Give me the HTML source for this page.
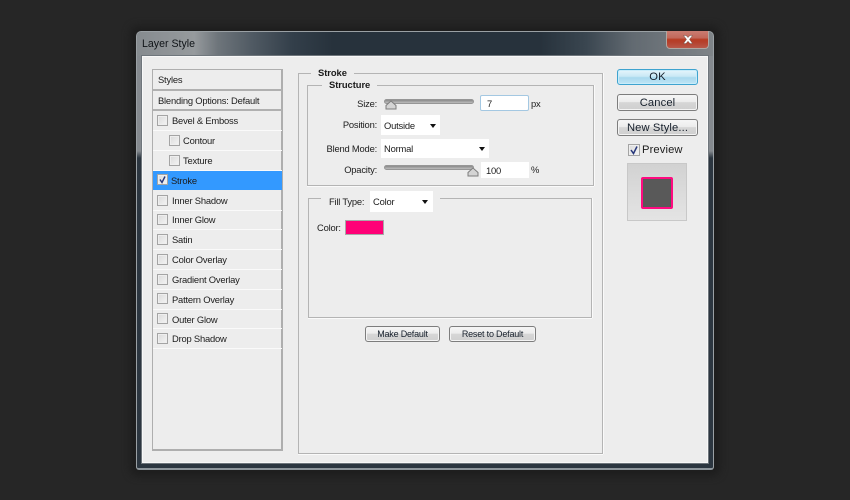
<!DOCTYPE html>
<html><head><meta charset="utf-8">
<style>
html,body{margin:0;padding:0;background:#262626;width:850px;height:500px;overflow:hidden}
body{position:relative;font-family:"Liberation Sans",sans-serif;font-size:9.4px;letter-spacing:-.2px;color:#1c1c1c;filter:blur(.3px)}
div,span{position:absolute;box-sizing:border-box}
.t{white-space:nowrap;line-height:12px;height:12px}
.win{left:136px;top:31px;width:578px;height:439px;border-radius:5px 5px 3px 3px;border:1px solid #9aa0a4;border-bottom:2px solid #8d959b;
background:linear-gradient(180deg,#858a8f 0,#858a8f 119px,#2c3640 126px,#2c3640 100%)}
.title{left:0;top:0;width:576px;height:24px;border-radius:4px 4px 0 0;background:linear-gradient(90deg,#868b8f 0,#969a9d 10%,#6e757b 14%,#505a63 20%,#333f4a 27%,#27323c 34%,#27323c 70%,#3a4650 78%,#626a71 86%,#7f8488 100%)}
.client{left:142px;top:56px;width:566px;height:407px;background:#ededed;border:1px solid #f8f8f8;outline:1px solid #6f767c}
.group{border:1px solid #b4b4b4;box-shadow:0 1px 0 #fafafa,1px 0 0 #fafafa}
.legend{background:#ededed;font-weight:bold;height:12px;line-height:12px;padding:0 7px;white-space:nowrap;font-size:9.4px;letter-spacing:-.05px}
.list{left:152px;top:69px;width:131px;height:382px;border:1px solid #aeaeae;border-width:1px 2px 2px 1px;background:#ededed}
.rowline{left:153px;width:129px;height:1px;background:#fafafa}
.hline{left:153px;width:129px;height:2px;background:#b0b0b0}
.cb{width:11px;height:11px;border:1px solid #a4a4a4;background:linear-gradient(135deg,#dadada,#f4f4f4);box-shadow:inset 0 0 0 1px #eeeeee}
.inp{background:#fff;height:16px;line-height:16px;padding-left:3px;white-space:nowrap}
.arrow{width:0;height:0;border-left:3.5px solid transparent;border-right:3.5px solid transparent;border-top:4px solid #111}
.track{height:5px;border-radius:3px;background:linear-gradient(180deg,#8a8a8a,#bcbcbc);border:1px solid #969696}
.btn{border:1px solid #7d7d7d;border-radius:3px;background:linear-gradient(180deg,#f6f6f6 0,#ececec 45%,#d6d6d6 50%,#cfcfcf 100%);box-shadow:inset 0 0 0 1px #f4f4f4;text-align:center;color:#17202c;white-space:nowrap}
.big{font-size:11.2px;letter-spacing:.12px}
</style></head><body>
<div style="left:130px;top:26px;width:590px;height:450px;background:#1d1d1d;border-radius:8px;filter:blur(4px)"></div>
<div class="win"><div class="title"></div></div>
<div class="t" style="left:142px;top:37px;font-size:10.6px;line-height:14px;height:14px;letter-spacing:0;color:#101418">Layer Style</div>

<!-- close -->
<div style="left:666px;top:31px;width:43px;height:18px;border:1px solid #b0a8a2;border-top:0;border-radius:0 0 4px 4px;background:linear-gradient(180deg,#c97d72 0,#c2685a 40%,#b73c24 50%,#b5402c 65%,#b9584a 100%)"></div>
<svg style="position:absolute;left:682px;top:35px" width="12" height="9"><path d="M1.5 0.5 H4 L6 2.6 L8 0.5 H10.5 L7.5 4.4 L10.5 8.5 H8 L6 6.2 L4 8.5 H1.5 L4.5 4.4 Z" fill="#fff" stroke="#6e5a55" stroke-width=".5"/></svg>

<div class="client"></div>

<!-- list -->
<div class="list"></div>
<div class="t" style="left:158px;top:74px">Styles</div>
<div class="hline" style="top:89px"></div>
<div class="t" style="left:158px;top:95px">Blending Options: Default</div>
<div class="hline" style="top:109px"></div>
<div class="rowline" style="top:130px"></div>
<div class="rowline" style="top:150px"></div>
<div class="rowline" style="top:170px"></div>
<div class="rowline" style="top:210px"></div>
<div class="rowline" style="top:229px"></div>
<div class="rowline" style="top:249px"></div>
<div class="rowline" style="top:269px"></div>
<div class="rowline" style="top:289px"></div>
<div class="rowline" style="top:309px"></div>
<div class="rowline" style="top:328px"></div>
<div class="rowline" style="top:348px"></div>
<div style="left:153px;top:171px;width:129px;height:19px;background:#3399ff"></div>

<div class="cb" style="left:157px;top:115px"></div><div class="t" style="left:172px;top:115px">Bevel &amp; Emboss</div>
<div class="cb" style="left:169px;top:135px"></div><div class="t" style="left:183px;top:135px">Contour</div>
<div class="cb" style="left:169px;top:155px"></div><div class="t" style="left:183px;top:155px">Texture</div>
<div class="cb" style="left:157px;top:174px"></div>
<svg style="position:absolute;left:157px;top:174px" width="11" height="11"><path d="M3 5.5 L5 8.5 L8 2.5" fill="none" stroke="#26367a" stroke-width="1.4"/></svg>
<div class="t" style="left:171px;top:175px">Stroke</div>
<div class="cb" style="left:157px;top:195px"></div><div class="t" style="left:172px;top:195px">Inner Shadow</div>
<div class="cb" style="left:157px;top:214px"></div><div class="t" style="left:172px;top:214px">Inner Glow</div>
<div class="cb" style="left:157px;top:234px"></div><div class="t" style="left:172px;top:234px">Satin</div>
<div class="cb" style="left:157px;top:254px"></div><div class="t" style="left:172px;top:254px">Color Overlay</div>
<div class="cb" style="left:157px;top:274px"></div><div class="t" style="left:172px;top:274px">Gradient Overlay</div>
<div class="cb" style="left:157px;top:293px"></div><div class="t" style="left:172px;top:294px">Pattern Overlay</div>
<div class="cb" style="left:157px;top:313px"></div><div class="t" style="left:172px;top:314px">Outer Glow</div>
<div class="cb" style="left:157px;top:333px"></div><div class="t" style="left:172px;top:333px">Drop Shadow</div>

<!-- stroke group -->
<div class="group" style="left:298px;top:73px;width:305px;height:381px"></div>
<div class="legend" style="left:311px;top:67px">Stroke</div>
<div class="group" style="left:307px;top:85px;width:287px;height:101px"></div>
<div class="legend" style="left:322px;top:79px">Structure</div>

<div class="t" style="right:473px;top:98px">Size:</div>
<div class="track" style="left:384px;top:99px;width:90px"></div>
<svg style="position:absolute;left:385px;top:100px" width="12" height="10"><path d="M1 9 V5.5 L6 1 L11 5.5 V9 Z" fill="#d4d4d4" stroke="#7d7d7d"/></svg>
<div class="inp" style="left:480px;top:95px;width:49px;height:16px;border:1px solid #a4c8e2;border-radius:2px;padding-left:6px;line-height:15px">7</div>
<div class="t" style="left:531px;top:98px">px</div>

<div class="t" style="right:473px;top:119px">Position:</div>
<div class="inp" style="left:381px;top:115px;width:59px;height:20px;line-height:21px">Outside</div>
<div class="arrow" style="left:430px;top:124px"></div>

<div class="t" style="right:473px;top:143px">Blend Mode:</div>
<div class="inp" style="left:381px;top:139px;width:108px;height:19px;line-height:20px">Normal</div>
<div class="arrow" style="left:479px;top:147px"></div>

<div class="t" style="right:473px;top:164px">Opacity:</div>
<div class="track" style="left:384px;top:165px;width:90px"></div>
<svg style="position:absolute;left:467px;top:167px" width="12" height="10"><path d="M1 9 V5.5 L6 1 L11 5.5 V9 Z" fill="#d4d4d4" stroke="#7d7d7d"/></svg>
<div class="inp" style="left:481px;top:162px;width:48px;height:16px;padding-left:5px;line-height:17px">100</div>
<div class="t" style="left:531px;top:164px">%</div>

<div class="group" style="left:308px;top:198px;width:284px;height:120px"></div>
<div style="left:321px;top:192px;width:119px;height:14px;background:#ededed"></div>
<div class="t" style="left:329px;top:196px">Fill Type:</div>
<div class="inp" style="left:370px;top:191px;width:63px;height:21px;line-height:22px">Color</div>
<div class="arrow" style="left:422px;top:200px"></div>
<div class="t" style="left:317px;top:222px">Color:</div>
<div style="left:345px;top:220px;width:39px;height:15px;background:#ff0077;border:1px solid #a8a8a8"></div>

<div class="btn" style="left:365px;top:326px;width:75px;height:16px;line-height:15px;font-size:9px">Make Default</div>
<div class="btn" style="left:449px;top:326px;width:87px;height:16px;line-height:15px;font-size:9px">Reset to Default</div>

<!-- right -->
<div class="btn big" style="left:617px;top:69px;width:81px;height:16px;line-height:15px;border:1px solid #3fa3cf;background:linear-gradient(180deg,#e6f5fb 0,#c9e8f5 45%,#a9d9ee 55%,#bfe5f5 100%);box-shadow:inset 0 0 0 1px #c8ecfa">OK</div>
<div class="btn big" style="left:617px;top:94px;width:81px;height:17px;line-height:16px">Cancel</div>
<div class="btn big" style="left:617px;top:119px;width:81px;height:17px;line-height:16px">New Style...</div>
<div class="cb" style="left:628px;top:144px;width:12px;height:12px"></div>
<svg style="position:absolute;left:628px;top:144px" width="12" height="12"><path d="M3 6 L5.5 9.5 L9 2.5" fill="none" stroke="#26367a" stroke-width="1.5"/></svg>
<div class="t big" style="left:642px;top:144px">Preview</div>
<div style="left:627px;top:163px;width:60px;height:58px;background:linear-gradient(180deg,#d2d2d2,#e4e4e4);border:1px solid #c8c8c8"></div>
<div style="left:641px;top:177px;width:32px;height:32px;background:#595959;border:2px solid #ff0a80;border-radius:2px"></div>
</body></html>
